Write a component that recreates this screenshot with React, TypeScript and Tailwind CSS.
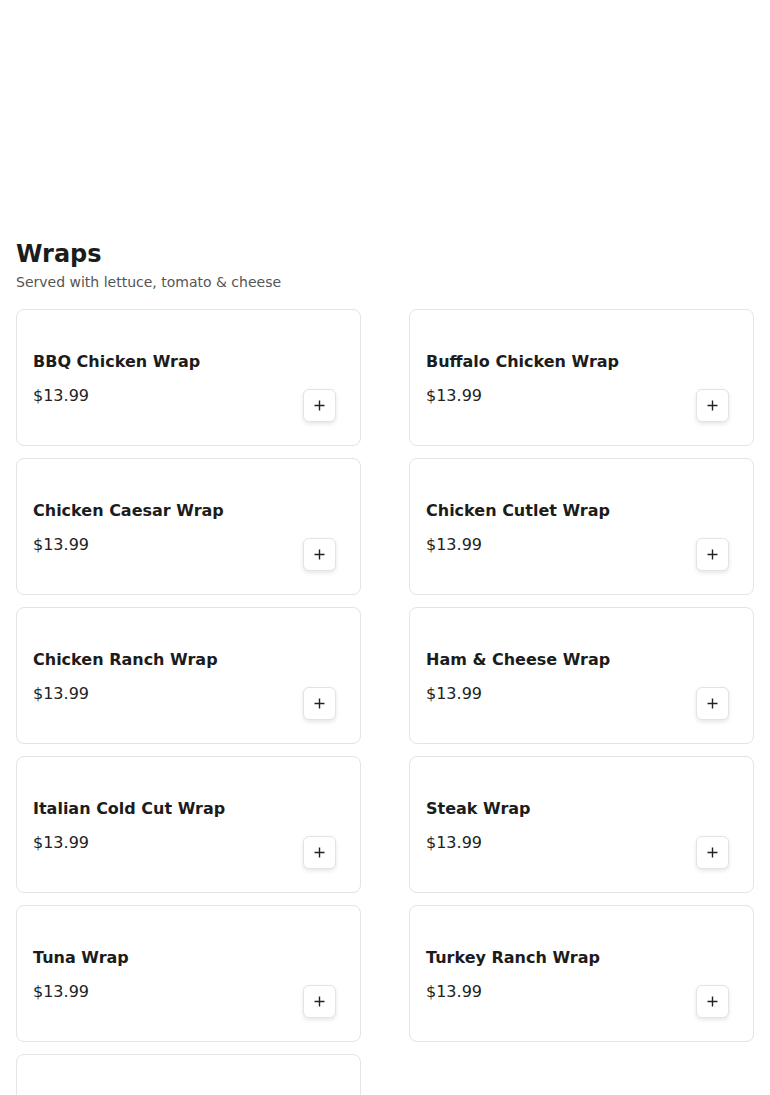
import React from "react";

const wraps = [
  "BBQ Chicken Wrap",
  "Buffalo Chicken Wrap",
  "Chicken Caesar Wrap",
  "Chicken Cutlet Wrap",
  "Chicken Ranch Wrap",
  "Ham & Cheese Wrap",
  "Italian Cold Cut Wrap",
  "Steak Wrap",
  "Tuna Wrap",
  "Turkey Ranch Wrap",
  "Veggie Wrap",
];

function AddButton() {
  return (
    <button className="mt-[5px] mr-2 w-[33px] h-[33px] shrink-0 rounded-md border border-[#e3e3e3] bg-white shadow-[0_2px_4px_rgba(0,0,0,0.1)] flex items-center justify-center text-[#222]">
      <svg width="11" height="11" viewBox="0 0 11 11" fill="none">
        <path d="M5.5 0.5v10M0.5 5.5h10" stroke="currentColor" strokeWidth="1.4" />
      </svg>
    </button>
  );
}

export default function App() {
  return (
    <main className="min-h-screen bg-white px-4 pt-[238px] font-['DejaVu_Sans',sans-serif]">
      {/* section header */}
      <h2 className="text-2xl leading-8 font-bold text-[#1c1c1c]">Wraps</h2>
      <p className="mt-0.5 text-sm leading-5 text-[#555]">Served with lettuce, tomato &amp; cheese</p>

      {/* items */}
      <div className="mt-[17px] grid grid-cols-2 gap-x-12 gap-y-3">
        {wraps.map((name) => (
          <div
            key={name}
            className="h-[137px] rounded-lg border border-[#e4e4e4] bg-white px-4 pt-[40px]"
          >
            <h3 className="text-base leading-6 font-bold text-[#1c1c1c]">{name}</h3>
            <div className="mt-[10px] flex items-start justify-between">
              <span className="text-base leading-6 text-[#222]">$13.99</span>
              <AddButton />
            </div>
          </div>
        ))}
      </div>
    </main>
  );
}
